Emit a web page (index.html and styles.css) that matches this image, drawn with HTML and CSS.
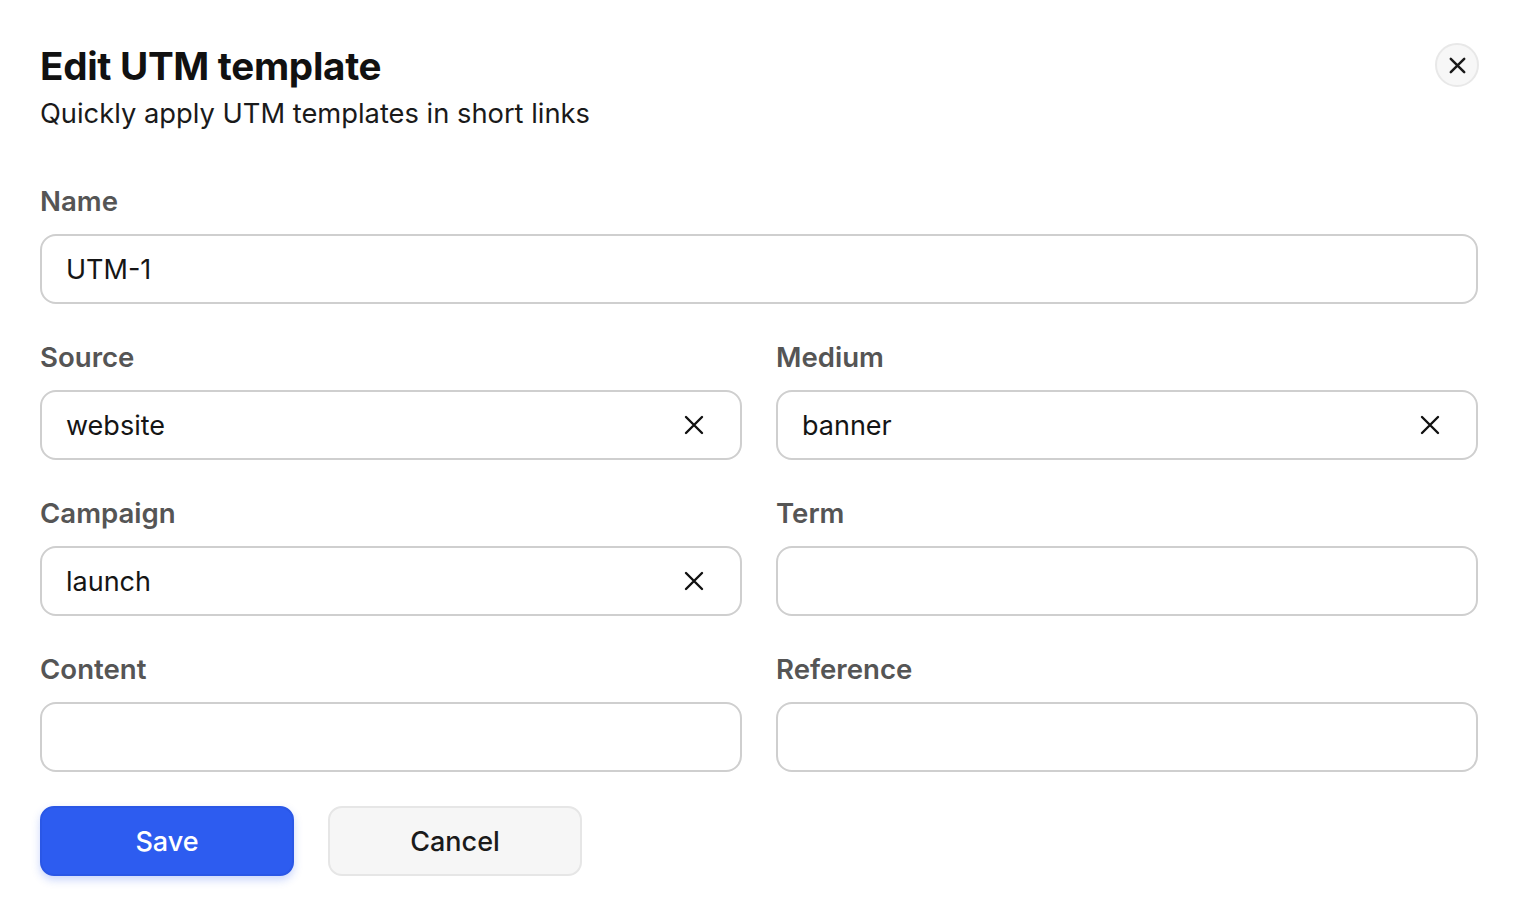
FILE: index.html
```html
<!DOCTYPE html>
<html lang="en">
<head>
  <meta charset="UTF-8" />
  <meta name="viewport" content="width=device-width, initial-scale=1.0"/>
  <title>Edit UTM template</title>
  <link rel="stylesheet" href="styles.css">
</head>
<body>
<div class="dialog">
  <div class="head">
    <div>
      <h1 class="title">Edit UTM template</h1>
      <p class="subtitle">Quickly apply UTM templates in short links</p>
    </div>
    <button class="close" type="button" aria-label="Close">
      <svg viewBox="0 0 24 24" width="24" height="24"><path d="M5 5L19 19M19 5L5 19" stroke="#1a1a1a" stroke-width="2.6" stroke-linecap="round" fill="none"/></svg>
    </button>
  </div>

  <form class="form">
    <div class="field wide">
      <label class="label">Name</label>
      <div class="input"><span class="value">UTM-1</span></div>
    </div>
    <div class="field">
      <label class="label">Source</label>
      <div class="input"><span class="value">website</span>
        <svg class="clear" viewBox="0 0 24 24" width="24" height="24"><path d="M4 4L20 20M20 4L4 20" stroke="#111" stroke-width="2.4" stroke-linecap="round" fill="none"/></svg>
      </div>
    </div>
    <div class="field">
      <label class="label">Medium</label>
      <div class="input"><span class="value">banner</span>
        <svg class="clear" viewBox="0 0 24 24" width="24" height="24"><path d="M4 4L20 20M20 4L4 20" stroke="#111" stroke-width="2.4" stroke-linecap="round" fill="none"/></svg>
      </div>
    </div>
    <div class="field">
      <label class="label">Campaign</label>
      <div class="input"><span class="value">launch</span>
        <svg class="clear" viewBox="0 0 24 24" width="24" height="24"><path d="M4 4L20 20M20 4L4 20" stroke="#111" stroke-width="2.4" stroke-linecap="round" fill="none"/></svg>
      </div>
    </div>
    <div class="field">
      <label class="label">Term</label>
      <div class="input"></div>
    </div>
    <div class="field">
      <label class="label">Content</label>
      <div class="input"></div>
    </div>
    <div class="field">
      <label class="label">Reference</label>
      <div class="input"></div>
    </div>
  </form>

  <div class="actions">
    <button class="btn primary" type="button">Save</button>
    <button class="btn secondary" type="button">Cancel</button>
  </div>
</div>
</body>
</html>
```

FILE: styles.css
```css
* { box-sizing: border-box; }
html, body { margin:0; padding:0; background:#fff; font-family:Inter, "Noto Sans", sans-serif; color:#111; }
.dialog { padding:42px 40px 40px 40px; }
.head { display:flex; justify-content:space-between; align-items:flex-start; }
.title { margin:0; font-size:38.6px; line-height:48px; font-weight:700; letter-spacing:-0.3px; color:#111; }
.subtitle { margin:5px 0 0; font-size:27.3px; line-height:38px; font-weight:400; color:#1a1a1a; }
.close {
  width:44px; height:44px; margin-top:1px; margin-right:-1px; border-radius:50%;
  border:2px solid #e8e8e8; background:#f7f7f7; padding:0;
  display:flex; align-items:center; justify-content:center;
}
.close svg { width:23px; height:23px; }
.form {
  display:grid; grid-template-columns:1fr 1fr; column-gap:34px; row-gap:35px;
  margin-top:50px;
}
.field { display:flex; flex-direction:column; gap:15px; }
.field.wide { grid-column:1 / 3; }
.label { font-size:27.6px; line-height:36px; font-weight:600; color:#555; }
.input {
  height:70px; border:2px solid #cfcfcf; border-radius:16px; background:#fff;
  display:flex; align-items:center; justify-content:space-between;
  padding:0 34px 0 24px;
}
.value { font-size:27px; color:#151515; }
.clear { width:24px; height:24px; }
.actions { display:flex; gap:34px; margin-top:34px; }
.btn {
  width:254px; height:70px; border-radius:14px; font-family:inherit;
  font-size:27px; font-weight:500; padding:0;
}
.primary {
  background:#2d5cf0; color:#fff; border:2px solid #2a57e6;
  box-shadow:0 4px 8px rgba(45,92,240,0.25);
}
.secondary { background:#f6f6f6; color:#1a1a1a; border:2px solid #e6e6e6; }
```
